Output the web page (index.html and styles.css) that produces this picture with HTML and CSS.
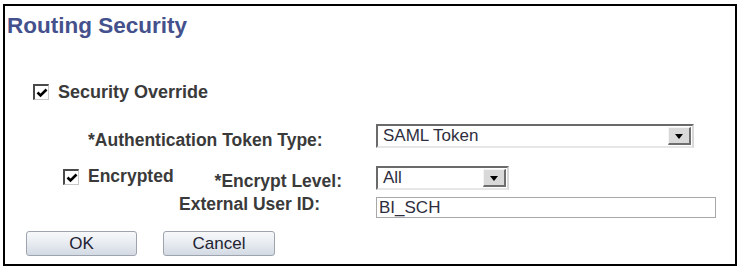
FILE: index.html
```html
<!DOCTYPE html>
<html>
<head>
<meta charset="utf-8">
<link rel="stylesheet" href="styles.css">
</head>
<body>
<div class="panel">
  <div class="title">Routing Security</div>
  <div class="row-override">
    <span class="chk"><svg width="12" height="10" viewBox="0 0 12 10"><path d="M1.5 4.5 L4.5 7.5 L10.5 1.5" fill="none" stroke="#000" stroke-width="2.6"/></svg></span>
    <span class="lbl lbl-so">Security Override</span>
  </div>

  <div class="frow frow-auth">
    <div class="left left-auth"><span class="lbl">*Authentication Token Type:</span></div>
    <div class="select sel-auth"><span class="sel-text">SAML Token</span><span class="arrow"><span class="tri"></span></span></div>
  </div>

  <div class="frow frow-enc">
    <div class="left left-enc">
      <span class="chk chk-enc"><svg width="12" height="10" viewBox="0 0 12 10"><path d="M1.5 4.5 L4.5 7.5 L10.5 1.5" fill="none" stroke="#000" stroke-width="2.6"/></svg></span>
      <span class="lbl lbl-encrypted">Encrypted</span>
      <span class="lbl lbl-level">*Encrypt Level:</span>
    </div>
    <div class="select sel-level"><span class="sel-text">All</span><span class="arrow"><span class="tri"></span></span></div>
  </div>

  <div class="frow frow-ext">
    <div class="left left-ext"><span class="lbl">External User ID:</span></div>
    <div class="input">BI_SCH</div>
  </div>

  <div class="buttons">
    <span class="btn btn-ok">OK</span>
    <span class="btn btn-cancel">Cancel</span>
  </div>
</div>
</body>
</html>
```
FILE: styles.css
```css
html, body {
  margin: 0;
  padding: 0;
  background: #ffffff;
}
body {
  font-family: "Liberation Sans", Arial, sans-serif;
  width: 739px;
  height: 269px;
  overflow: hidden;
}
.panel {
  box-sizing: border-box;
  margin: 4px 0 0 3px;
  width: 734px;
  height: 262px;
  border: 2px solid #000;
}
.title {
  margin-top: 8px;
  padding-left: 2px;
  font-size: 22.5px;
  line-height: 24px;
  font-weight: bold;
  color: #44518c;
}
.lbl {
  font-size: 17.5px;
  line-height: 20px;
  font-weight: bold;
  color: #3a3a3a;
  white-space: nowrap;
}
.lbl-so { font-size: 18px; }
.row-override {
  display: flex;
  align-items: center;
  height: 20px;
  margin-top: 44px;
  padding-left: 28px;
}
.chk {
  box-sizing: border-box;
  width: 16px;
  height: 16px;
  border-top: 2px solid #4a4a4a;
  border-left: 2px solid #4a4a4a;
  border-right: 1px solid #c8c8c8;
  border-bottom: 1px solid #c8c8c8;
  background: #fff;
  display: flex;
  align-items: center;
  justify-content: center;
  margin-right: 9px;
  flex: none;
}
.chk svg { display: block; }
.frow {
  display: flex;
  align-items: flex-start;
}
.left {
  width: 371px;
  flex: none;
  display: flex;
  align-items: flex-start;
}
.frow-auth { margin-top: 22px; height: 24px; }
.left-auth { padding-left: 83px; box-sizing: border-box; }
.left-auth .lbl { margin-top: 6px; }
.frow-enc { margin-top: 18px; height: 24px; }
.left-enc { padding-left: 58px; box-sizing: border-box; }
.chk-enc { margin-top: 3px; }
.lbl-level { margin-left: 41px; margin-top: 5px; }
.frow-ext { margin-top: 4px; height: 23px; }
.left-ext { padding-left: 174px; box-sizing: border-box; }
.frow-ext .input { margin-top: 3px; }
.select {
  box-sizing: border-box;
  height: 24px;
  display: flex;
  align-items: center;
  justify-content: space-between;
  background: #fff;
  border-top: 2px solid #6a6a6a;
  border-left: 2px solid #6a6a6a;
  border-right: 2px solid #d8d8d8;
  border-bottom: 2px solid #e6e6e6;
  padding-right: 1px;
  flex: none;
}
.sel-auth { width: 318px; }
.sel-level { width: 133px; }
.sel-text {
  padding-left: 5px;
  font-size: 17px;
  line-height: 20px;
  color: #2e2e3e;
}
.arrow {
  box-sizing: border-box;
  width: 23px;
  height: 18px;
  background: #d9d9d9;
  border-top: 1px solid #f4f4f4;
  border-left: 1px solid #f4f4f4;
  border-right: 2px solid #6e6e6e;
  border-bottom: 2px solid #6e6e6e;
  display: flex;
  align-items: center;
  justify-content: center;
}
.tri {
  width: 0;
  height: 0;
  border-left: 4px solid transparent;
  border-right: 4px solid transparent;
  border-top: 5px solid #000;
  margin-top: 1px;
}
.input {
  box-sizing: border-box;
  width: 340px;
  height: 21px;
  border: 1px solid #a8a8a8;
  padding-left: 2px;
  font-size: 17px;
  line-height: 19px;
  color: #2e2e3e;
  flex: none;
}
.buttons {
  display: flex;
  margin-top: 14px;
  padding-left: 21px;
  gap: 26px;
}
.btn {
  box-sizing: border-box;
  height: 25px;
  border: 1px solid #9ea4ad;
  border-radius: 3px;
  background: linear-gradient(#f7f8fa 0%, #e9edf2 45%, #d3dae3 100%);
  font-size: 17px;
  line-height: 23px;
  color: #222233;
  text-align: center;
}
.btn-ok { width: 111px; }
.btn-cancel { width: 112px; }
```
